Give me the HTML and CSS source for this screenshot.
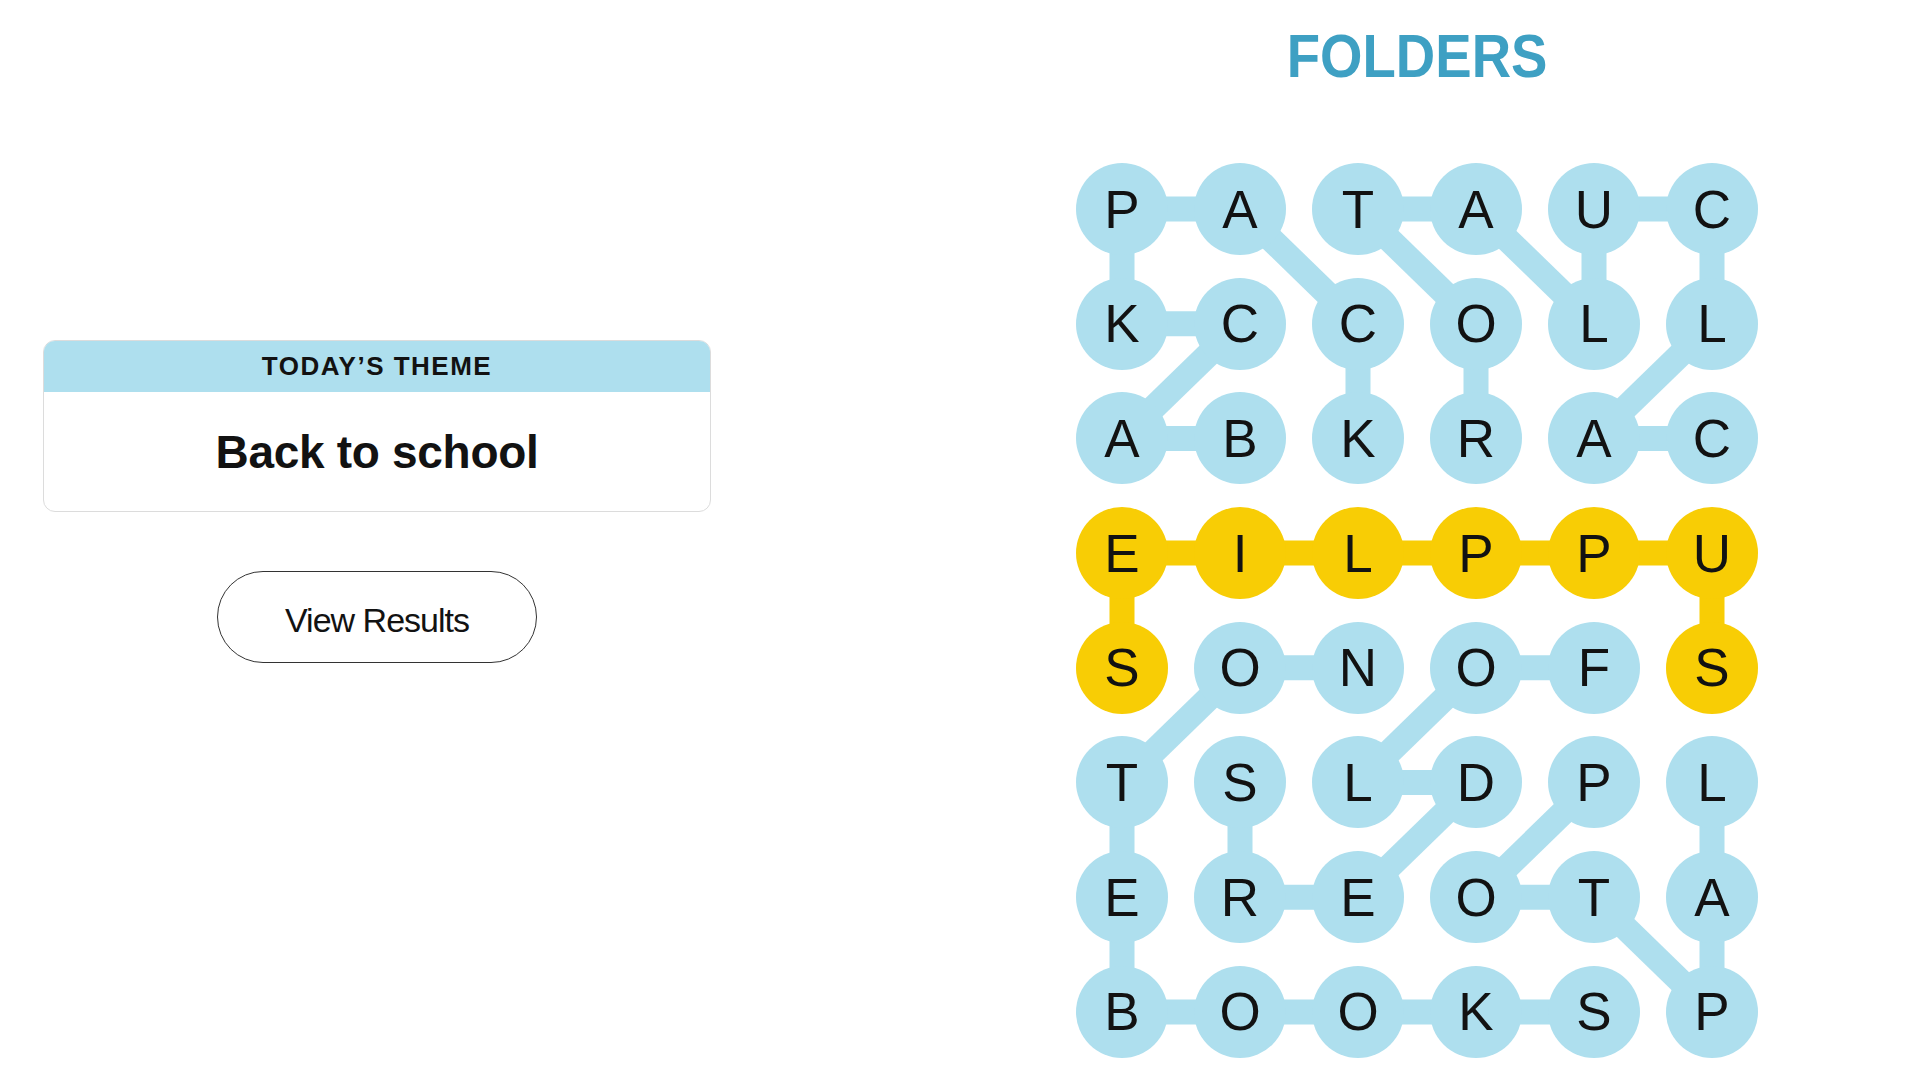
FILE: index.html
```html
<!DOCTYPE html>
<html>
    <head>
        <title>Strands - Folders</title>
        <meta name="viewport" content="width=device-width, initial-scale=1.0">
        <link rel="stylesheet" href="styles.css">
    </head>
    <body>
        <div id="page">

            <div id="leftPanel">
                <div class="themeCard">
                    <div class="themeHead">TODAY’S THEME</div>
                    <div class="themeBody">Back to school</div>
                </div>
                <button class="resultsBtn" type="button">View Results</button>
            </div>

            <div id="rightPanel">
                <h1 class="wordTitle"><span>FOLDERS</span></h1>

                <div class="board">
                    <!-- connections between found letters -->
                    <svg class="links" width="682" height="895" viewBox="0 0 682 895">
                        <g stroke="#aedfee" stroke-width="25">
                            <line x1="46" y1="46" x2="164" y2="46"/>
                            <line x1="46" y1="46" x2="46" y2="160.7"/>
                            <line x1="164" y1="46" x2="282" y2="160.7"/>
                            <line x1="282" y1="46" x2="400" y2="46"/>
                            <line x1="282" y1="46" x2="400" y2="160.7"/>
                            <line x1="400" y1="46" x2="518" y2="160.7"/>
                            <line x1="518" y1="46" x2="636" y2="46"/>
                            <line x1="518" y1="46" x2="518" y2="160.7"/>
                            <line x1="636" y1="46" x2="636" y2="160.7"/>
                            <line x1="46" y1="160.7" x2="164" y2="160.7"/>
                            <line x1="164" y1="160.7" x2="46" y2="275.4"/>
                            <line x1="636" y1="160.7" x2="518" y2="275.4"/>
                            <line x1="282" y1="160.7" x2="282" y2="275.4"/>
                            <line x1="400" y1="160.7" x2="400" y2="275.4"/>
                            <line x1="46" y1="275.4" x2="164" y2="275.4"/>
                            <line x1="518" y1="275.4" x2="636" y2="275.4"/>

                            <line x1="164" y1="504.8" x2="282" y2="504.8"/>
                            <line x1="400" y1="504.8" x2="518" y2="504.8"/>
                            <line x1="164" y1="504.8" x2="46" y2="619.5"/>
                            <line x1="400" y1="504.8" x2="282" y2="619.5"/>
                            <line x1="282" y1="619.5" x2="400" y2="619.5"/>
                            <line x1="46" y1="619.5" x2="46" y2="734.2"/>
                            <line x1="164" y1="619.5" x2="164" y2="734.2"/>
                            <line x1="400" y1="619.5" x2="282" y2="734.2"/>
                            <line x1="518" y1="619.5" x2="400" y2="734.2"/>
                            <line x1="636" y1="619.5" x2="636" y2="734.2"/>
                            <line x1="164" y1="734.2" x2="282" y2="734.2"/>
                            <line x1="400" y1="734.2" x2="518" y2="734.2"/>
                            <line x1="46" y1="734.2" x2="46" y2="848.9"/>
                            <line x1="518" y1="734.2" x2="636" y2="848.9"/>
                            <line x1="636" y1="734.2" x2="636" y2="848.9"/>
                            <line x1="46" y1="848.9" x2="518" y2="848.9"/>
                        </g>
                        <g stroke="#f8cd05" stroke-width="25">
                            <line x1="46" y1="390.1" x2="636" y2="390.1"/>
                            <line x1="46" y1="390.1" x2="46" y2="504.8"/>
                            <line x1="636" y1="390.1" x2="636" y2="504.8"/>
                        </g>
                    </svg>

                    <div class="letters">
                        <span class="cell">P</span><span class="cell">A</span><span class="cell">T</span><span class="cell">A</span><span class="cell">U</span><span class="cell">C</span>
                        <span class="cell">K</span><span class="cell">C</span><span class="cell">C</span><span class="cell">O</span><span class="cell">L</span><span class="cell">L</span>
                        <span class="cell">A</span><span class="cell">B</span><span class="cell">K</span><span class="cell">R</span><span class="cell">A</span><span class="cell">C</span>
                        <span class="cell gold">E</span><span class="cell gold">I</span><span class="cell gold">L</span><span class="cell gold">P</span><span class="cell gold">P</span><span class="cell gold">U</span>
                        <span class="cell gold">S</span><span class="cell">O</span><span class="cell">N</span><span class="cell">O</span><span class="cell">F</span><span class="cell gold">S</span>
                        <span class="cell">T</span><span class="cell">S</span><span class="cell">L</span><span class="cell">D</span><span class="cell">P</span><span class="cell">L</span>
                        <span class="cell">E</span><span class="cell">R</span><span class="cell">E</span><span class="cell">O</span><span class="cell">T</span><span class="cell">A</span>
                        <span class="cell">B</span><span class="cell">O</span><span class="cell">O</span><span class="cell">K</span><span class="cell">S</span><span class="cell">P</span>
                    </div>
                </div>
            </div>

        </div>
    </body>
</html>
```

FILE: styles.css
```css
*{
    margin: 0;
    padding: 0;
    box-sizing: border-box;
}

body{
    width: 100vw;
    height: 100vh;
    overflow: hidden;
    background-color: #ffffff;
    color: #121212;
    font-family: "Liberation Sans", Arial, sans-serif;
}

#page{
    display: flex;
    flex-direction: row;
}

#leftPanel{
    width: 754px;
    padding: 340px 43px 0 43px;
    display: flex;
    flex-direction: column;
    align-items: center;
}

.themeCard{
    width: 668px;
    border: 1px solid #dcdcdc;
    border-radius: 12px;
    overflow: hidden;
}

.themeHead{
    height: 51px;
    background-color: #aedfee;
    display: flex;
    align-items: center;
    justify-content: center;
    font-size: 26px;
    font-weight: 700;
    letter-spacing: 1.5px;
}

.themeBody{
    height: 119px;
    display: flex;
    align-items: center;
    justify-content: center;
    font-size: 46px;
    font-weight: 700;
    letter-spacing: -0.3px;
}

.resultsBtn{
    margin-top: 59px;
    width: 320px;
    height: 92px;
    padding-top: 6px;
    border: 1px solid #333333;
    border-radius: 46px;
    background-color: #ffffff;
    color: #121212;
    font-family: "Liberation Sans", Arial, sans-serif;
    font-size: 34px;
    letter-spacing: -1px;
}

#rightPanel{
    margin-left: 322px;
    width: 682px;
    display: flex;
    flex-direction: column;
    align-items: center;
}

.wordTitle{
    margin-top: 25px;
    height: 62px;
    line-height: 62px;
    font-size: 62px;
    font-weight: 700;
    color: #3ea0c3;
}

/* narrower face, like the original condensed gothic */
.wordTitle span{
    display: inline-block;
    transform: scaleX(0.88);
}

.board{
    position: relative;
    margin-top: 76px;
    width: 682px;
    height: 895px;
}

.links{
    position: absolute;
    left: 0;
    top: 0;
}

.letters{
    position: relative;
    display: grid;
    grid-template-columns: repeat(6, 92px);
    grid-auto-rows: 92px;
    column-gap: 26px;
    row-gap: 22.7px;
}

.cell{
    display: flex;
    align-items: center;
    justify-content: center;
    border-radius: 50%;
    background-color: #aedfee;
    font-size: 53px;
    line-height: 1;
}

.gold{
    background-color: #f8cd05;
}
```
